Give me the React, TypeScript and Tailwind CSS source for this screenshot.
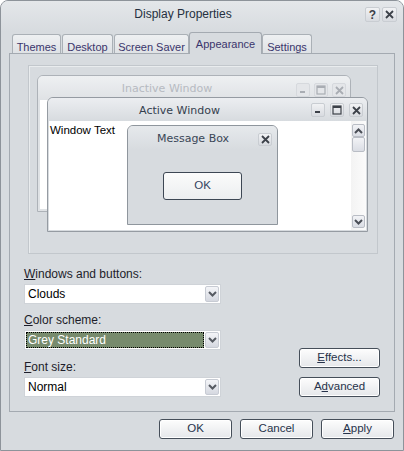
import React from "react";
import clsx from "clsx";

const sans = "font-['Liberation_Sans',Arial,sans-serif]";
const verdana = "font-['DejaVu_Sans',Verdana,sans-serif]";

function Chevron({ up = false }: { up?: boolean }) {
  return (
    <svg width="9" height="6" viewBox="0 0 9 6">
      <path d={up ? "M1 5 L4.5 1.5 L8 5" : "M1 1 L4.5 4.5 L8 1"} fill="none" stroke="currentColor" strokeWidth="2" />
    </svg>
  );
}

function Glyph({ kind }: { kind: "min" | "max" | "close" | "help" }) {
  if (kind === "min")
    return (
      <svg width="8" height="8" viewBox="0 0 8 8">
        <rect x="1" y="5" width="5" height="2" fill="currentColor" />
      </svg>
    );
  if (kind === "max")
    return (
      <svg width="10" height="10" viewBox="0 0 10 10">
        <rect x="1" y="1" width="8" height="8" fill="none" stroke="currentColor" strokeWidth="1.2" />
        <rect x="1" y="1" width="8" height="2" fill="currentColor" />
      </svg>
    );
  if (kind === "help")
    return (
      <span className={clsx(sans, "text-[12px] font-bold leading-none")}>?</span>
    );
  return (
    <svg width="9" height="9" viewBox="0 0 9 9">
      <path d="M1 1 L8 8 M8 1 L1 8" stroke="currentColor" strokeWidth="1.8" />
    </svg>
  );
}

function CapBtn({ kind, faded = false, size = "h-[14px] w-[14px]" }: { kind: "min" | "max" | "close" | "help"; faded?: boolean; size?: string }) {
  return (
    <div
      className={clsx(
        "flex items-center justify-center rounded-[2px] border",
        size,
        faded
          ? "border-[#d6d9dd] bg-[#e4e6e9] text-[#a9adb3]"
          : "border-[#c9cdd2] bg-gradient-to-b from-[#f1f2f4] to-[#d8dbe0] text-[#3c4149]"
      )}
    >
      <Glyph kind={kind} />
    </div>
  );
}

function Combo({ value, selected = false }: { value: string; selected?: boolean }) {
  return (
    <div className="flex h-[20px] w-[197px] border border-[#cfd3d8] bg-white p-px">
      <div
        className={clsx(
          "flex flex-1 items-center text-[12px] leading-none",
          selected ? "border border-dotted border-black bg-[#778b6d] pl-[1px] text-white" : "pl-[2px] text-black"
        )}
      >
        {value}
      </div>
      <div className="ml-[1px] flex w-[14px] items-center justify-center rounded-[2px] border border-[#c7cbd3] bg-gradient-to-b from-[#f4f5f8] to-[#d5d8e0] text-[#565a62]">
        <Chevron />
      </div>
    </div>
  );
}

function Button({ children, className = "" }: { children: React.ReactNode; className?: string }) {
  return (
    <div
      className={clsx(
        "flex h-[20px] items-center justify-center rounded-[3px] border border-[#454e59] bg-gradient-to-b from-[#fdfdfd] to-[#e5e7ea] text-[11.5px] text-[#26324a] shadow-[inset_0_0_0_1px_#ffffff]",
        className
      )}
    >
      {children}
    </div>
  );
}

function Tab({ label, width, active = false }: { label: string; width: string; active?: boolean }) {
  return (
    <div
      className={clsx(
        "flex justify-center rounded-t-[3px] border border-b-0 text-[11px] text-[#3a356c]",
        width,
        active
          ? "h-[22px] border-[#a4aab1] bg-[#d7dbdf] pt-[3px]"
          : "mb-px h-[19px] border-[#aab0b6] bg-gradient-to-b from-[#eef0f2] to-[#dfe2e5] pt-[4px]"
      )}
    >
      {label}
    </div>
  );
}

export default function App() {
  return (
    <div className={clsx(sans, "h-[451px] w-[404px] bg-white")}>
      <div className="flex h-full flex-col rounded-t-[8px] border border-[#8d939a] bg-[#d7dbdf]">
        {/* title bar */}
        <div className="flex h-[31px] items-start rounded-t-[7px] bg-gradient-to-b from-[#e4e7ea] to-[#d7dbdf] pr-[6px] pt-[6px]">
          <div className="flex-1 text-center text-[12px] leading-[14px] text-[#253040]">Display Properties</div>
          <div className="flex gap-[2px]">
            <CapBtn kind="help" size="h-[15px] w-[15px]" />
            <CapBtn kind="close" size="h-[15px] w-[15px]" />
          </div>
        </div>

        {/* tabs */}
        <div className="relative z-10 -mb-px flex h-[22px] items-end pl-[11px]">
          <Tab label="Themes" width="w-[49px]" />
          <div className="w-[1px]" />
          <Tab label="Desktop" width="w-[51px]" />
          <div className="w-[1px]" />
          <Tab label="Screen Saver" width="w-[75px]" />
          <Tab label="Appearance" width="w-[73px]" active />
          <Tab label="Settings" width="w-[50px]" />
        </div>

        {/* panel */}
        <div className="mx-[8px] flex h-[359px] flex-col border border-[#a4aab1] bg-[#d7dbdf]">
          {/* preview */}
          <div className="relative ml-[18px] mt-[11px] h-[189px] w-[350px] border border-[#c2c7cc] shadow-[inset_1px_1px_0_#e9ecee]">
            {/* inactive window */}
            <div className="absolute left-[8px] top-[9px] flex h-[137px] w-[314px] flex-col rounded-t-[6px] border border-[#adb2b8] bg-[#dfe2e5]">
              <div className="flex h-[24px] items-start rounded-t-[5px] bg-gradient-to-b from-[#eef0f2] to-[#dfe2e5] pr-[4px] pt-[6px]">
                <div className={clsx(verdana, "flex-1 text-center text-[11px] leading-[14px] text-[#b6bac1]")}>Inactive Window</div>
                <div className="mt-[1px] flex gap-[4px]">
                  <CapBtn kind="min" faded />
                  <CapBtn kind="max" faded />
                  <CapBtn kind="close" faded />
                </div>
              </div>
              <div className="mx-[2px] mb-[2px] flex-1 bg-white" />
            </div>

            {/* active window */}
            <div className="absolute left-[18px] top-[31px] flex h-[135px] w-[321px] flex-col rounded-t-[6px] border border-[#959ba2] bg-[#d7dbdf]">
              <div className="flex h-[23px] items-start rounded-t-[5px] bg-gradient-to-b from-[#eceef1] to-[#d7dbdf] pr-[4px] pt-[5px]">
                <div className={clsx(verdana, "mt-[1px] flex-1 text-center text-[11px] leading-[14px] text-[#34404e]")}>Active Window</div>
                <div className="flex gap-[5px]">
                  <CapBtn kind="min" />
                  <CapBtn kind="max" />
                  <CapBtn kind="close" />
                </div>
              </div>
              <div className="mx-px mb-px flex flex-1 bg-white">
                <div className="flex-1 pl-px pt-[3px] text-[11.5px] leading-[13px] text-black">Window Text</div>
                <div className="flex w-[15px] flex-col bg-gradient-to-r from-[#f3f3f3] to-[#fbfbfb] px-px pb-[2px] pt-[3px]">
                  <div className="flex h-[13px] items-center justify-center rounded-[2px] border border-[#b9bdc5] bg-gradient-to-b from-[#f2f3f6] to-[#dadde4] text-[#4a4e56]">
                    <Chevron up />
                  </div>
                  <div className="h-[15px] rounded-[2px] border border-[#b9bdc5] bg-gradient-to-b from-[#f2f3f6] to-[#dadde4]" />
                  <div className="flex-1" />
                  <div className="flex h-[13px] items-center justify-center rounded-[2px] border border-[#b9bdc5] bg-gradient-to-b from-[#f2f3f6] to-[#dadde4] text-[#4a4e56]">
                    <Chevron />
                  </div>
                </div>
              </div>
            </div>

            {/* message box */}
            <div className="absolute left-[98px] top-[59px] flex h-[100px] w-[151px] flex-col rounded-t-[6px] border border-[#8f969d] bg-[#d7dbdf]">
              <div className="flex h-[24px] items-start rounded-t-[5px] bg-gradient-to-b from-[#e6e9ec] to-[#d7dbdf] pr-[5px] pt-[6px]">
                <div className={clsx(verdana, "flex-1 text-center text-[11px] leading-[14px] text-[#3a4656]")}>Message Box</div>
                <div className="mt-px">
                  <CapBtn kind="close" size="h-[13px] w-[14px]" />
                </div>
              </div>
              <div className="flex justify-center pt-[22px]">
                <div className="flex h-[28px] w-[79px] items-center justify-center rounded-[3px] border-[1.5px] border-[#3d4754] bg-gradient-to-b from-[#fbfbfb] to-[#eceef0] text-[11.5px] text-[#33425e]">
                  OK
                </div>
              </div>
            </div>
          </div>

          {/* settings */}
          <div className="flex flex-1 items-end justify-between pb-[14px] pl-[14px] pr-[14px]">
            <div className="flex flex-col text-[12px] leading-[14px] text-[#1d1d2a]">
              <div className="mb-[3px]">
                <span className="underline">W</span>indows and buttons:
              </div>
              <Combo value="Clouds" />
              <div className="mb-[3px] mt-[9px]">
                <span className="underline">C</span>olor scheme:
              </div>
              <Combo value="Grey Standard" selected />
              <div className="mb-[3px] mt-[10px]">
                <span className="underline">F</span>ont size:
              </div>
              <Combo value="Normal" />
            </div>
            <div className="flex flex-col gap-[9px]">
              <Button className="w-[81px]">
                <span className="underline">E</span>ffects...
              </Button>
              <Button className="w-[81px]">
                A<span className="underline">d</span>vanced
              </Button>
            </div>
          </div>
        </div>

        {/* bottom buttons */}
        <div className="flex justify-end gap-[8px] pr-[9px] pt-[7px]">
          <Button className="w-[73px]">OK</Button>
          <Button className="w-[73px]">Cancel</Button>
          <Button className="w-[73px]">
            <span className="underline">A</span>pply
          </Button>
        </div>
      </div>
    </div>
  );
}
